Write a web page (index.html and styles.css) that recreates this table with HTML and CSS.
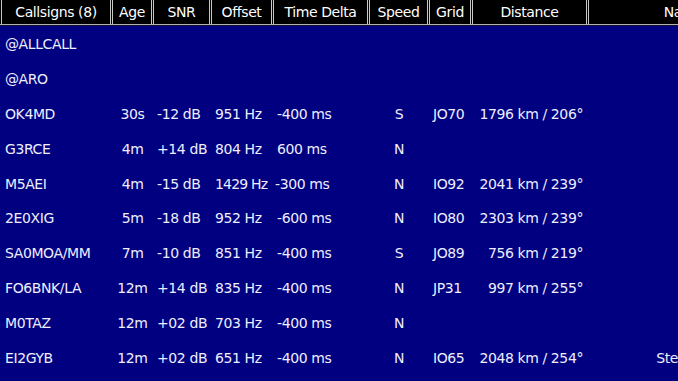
FILE: index.html
```html
<!DOCTYPE html>
<html>
<head>
<meta charset="utf-8">
<link rel="stylesheet" href="styles.css">
</head>
<body>
<div class="table">
  <div class="head">
    <div class="th">Callsigns (8)</div>
    <div class="th">Age</div>
    <div class="th">SNR</div>
    <div class="th">Offset</div>
    <div class="th">Time Delta</div>
    <div class="th">Speed</div>
    <div class="th">Grid</div>
    <div class="th">Distance</div>
    <div class="th">Name</div>
  </div>
  <div class="rule"></div>
  <div class="body">
    <div class="row"><span>@ALLCALL</span><span></span><span></span><span></span><span></span><span></span><span></span><span></span><span></span></div>
    <div class="row"><span>@ARO</span><span></span><span></span><span></span><span></span><span></span><span></span><span></span><span></span></div>
    <div class="row"><span>OK4MD</span><span class="c">30s</span><span>-12 dB</span><span>951 Hz</span><span>-400 ms</span><span class="c">S</span><span>JO70</span><span class="r">1796 km / 206°</span><span></span></div>
    <div class="row"><span>G3RCE</span><span class="c">4m</span><span>+14 dB</span><span>804 Hz</span><span>600 ms</span><span class="c">N</span><span></span><span></span><span></span></div>
    <div class="row"><span>M5AEI</span><span class="c">4m</span><span>-15 dB</span><span class="tight">1429 Hz</span><span class="td">-300 ms</span><span class="c">N</span><span>IO92</span><span class="r">2041 km / 239°</span><span></span></div>
    <div class="row"><span>2E0XIG</span><span class="c">5m</span><span>-18 dB</span><span>952 Hz</span><span>-600 ms</span><span class="c">N</span><span>IO80</span><span class="r">2303 km / 239°</span><span></span></div>
    <div class="row"><span>SA0MOA/MM</span><span class="c">7m</span><span>-10 dB</span><span>851 Hz</span><span>-400 ms</span><span class="c">S</span><span>JO89</span><span class="r">756 km / 219°</span><span></span></div>
    <div class="row"><span>FO6BNK/LA</span><span class="c">12m</span><span>+14 dB</span><span>835 Hz</span><span>-400 ms</span><span class="c">N</span><span>JP31</span><span class="r">997 km / 255°</span><span></span></div>
    <div class="row"><span>M0TAZ</span><span class="c">12m</span><span>+02 dB</span><span>703 Hz</span><span>-400 ms</span><span class="c">N</span><span></span><span></span><span></span></div>
    <div class="row"><span>EI2GYB</span><span class="c">12m</span><span>+02 dB</span><span>651 Hz</span><span>-400 ms</span><span class="c">N</span><span>IO65</span><span class="r">2048 km / 254°</span><span class="c">Stephen</span></div>
  </div>
</div>
</body>
</html>
```
FILE: styles.css
```css
html, body {
  margin: 0;
  padding: 0;
  background: #000080;
  overflow: hidden;
  width: 678px;
  height: 381px;
}
.table {
  width: 800px;
  font-family: "DejaVu Sans", sans-serif;
  font-size: 14px;
  letter-spacing: -0.4px;
  color: #eeeeff;
}
.head, .row {
  display: grid;
  grid-template-columns: 112px 41px 58px 62px 96px 60px 43px 116px 192px;
}
.head {
  background: #000;
  height: 24px;
}
.th {
  border-left: 1px solid #c8c8c8;
  border-right: 1px solid #c8c8c8;
  margin-right: 1px;
  display: flex;
  align-items: center;
  justify-content: center;
  color: #fff;
  white-space: nowrap;
  overflow: hidden;
}
.th:first-child {
  margin-left: 1px;
}
.rule {
  height: 1px;
  background: #b0b0b0;
  border-bottom: 1px solid #101030;
}
.body {
  padding-top: 1px;
}
.row {
  height: 34.8px;
  align-items: center;
}
.row span {
  padding-left: 4px;
  white-space: nowrap;
}
.row span:first-child {
  padding-left: 5px;
}
.row span.c {
  text-align: center;
  padding-left: 0;
}
.row span.r {
  text-align: right;
  padding-left: 0;
  padding-right: 5px;
}
.row span.tight {
  letter-spacing: -0.8px;
}
.row span.td {
  padding-left: 2px;
}
```
